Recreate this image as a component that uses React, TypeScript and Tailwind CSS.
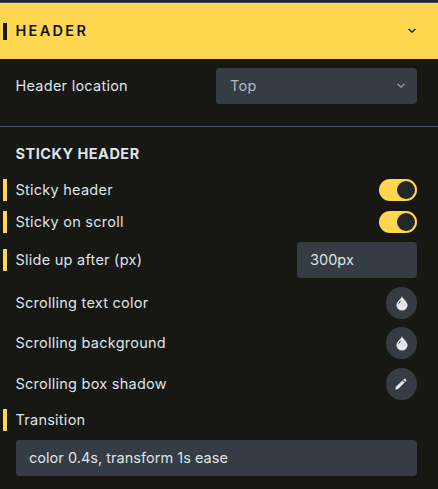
import type { ReactNode } from "react";

type RowProps = { label: string; marked?: boolean; className: string; children?: ReactNode };

function Row({ label, marked = false, className, children }: RowProps) {
  return (
    <div className={`flex items-center pl-[3px] pr-[21px] ${className}`}>
      <span className={`mr-[8.5px] h-[22px] w-1 shrink-0 ${marked ? "bg-[#ffd64f]" : ""}`} />
      <span className="flex-1 whitespace-nowrap leading-[22px]">{label}</span>
      {children}
    </div>
  );
}

function Toggle() {
  return (
    <span className="flex h-[22.5px] w-[38px] items-center justify-end rounded-full bg-[#ffd64f] pr-[2px]">
      <span className="size-[18px] rounded-full bg-[#23282d]" />
    </span>
  );
}

function Chevron({ className }: { className: string }) {
  return (
    <svg className={className} width="8" height="6" viewBox="0 0 8 6" fill="none" stroke="currentColor" strokeWidth="1.3">
      <path d="M0.6 1 L4 4.2 L7.4 1" />
    </svg>
  );
}

function Round({ children }: { children: ReactNode }) {
  return (
    <span className="flex size-[31.5px] items-center justify-center rounded-full bg-[#353c44] text-[#e2e6ea]">
      {children}
    </span>
  );
}

function Drop() {
  return (
    <svg className="ml-px" width="12" height="15" viewBox="0 0 12 15">
      <path fill="currentColor" d="M6 0.3C6.7 2.8 11.6 5.8 11.6 9.2A5.6 5.4 0 0 1 .4 9.2C.4 5.8 5.3 2.8 6 .3Z" />
      <path d="M2.9 7.3Q3.3 6 4.5 5" stroke="#353c44" strokeWidth="1" strokeLinecap="round" fill="none" />
    </svg>
  );
}

function Pencil() {
  return (
    <svg width="12" height="12" viewBox="0 0 12 12" fill="currentColor">
      <path d="M.4 11.5L.8 8.7L7.5 2.4L9.6 4.5L3.1 11.1Z" />
      <path d="M8.2 1.8L9.1 1Q9.8.4 10.5 1.1L11.1 1.7Q11.7 2.4 11.1 3.1L10.3 3.9Z" />
    </svg>
  );
}

export default function App() {
  return (
    <div className="h-[489px] w-[438px] overflow-hidden bg-[#171714] font-['Inter',sans-serif] text-[14.5px] tracking-[0.25px] text-[#dfe3e8]">
      <div className="h-[3px] border-b border-[#46505c] bg-[#23282d]" />
      <div className="flex h-14 items-center bg-[#ffd64f] pl-[3px] pr-[22px] text-[#11120f]">
        <span className="mr-[8.5px] h-[17px] w-1 bg-[#171714]" />
        <span className="flex-1 font-semibold tracking-[2.3px]">HEADER</span>
        <Chevron className="" />
      </div>
      <div className="h-[68px] border-b border-[#46505c] pt-[9px]">
        <Row label="Header location" className="h-9">
          <div className="flex h-9 w-[201px] items-center justify-between rounded bg-[#353c44] pl-[14px] pr-[12px] text-[#b3b9bf]">
            <span>Top</span>
            <Chevron className="text-[#949ba3]" />
          </div>
        </Row>
      </div>
      <h2 className="mt-[16px] pl-[15.5px] font-bold leading-[22px] tracking-[0.5px]">STICKY HEADER</h2>
      <Row label="Sticky header" marked className="mt-[9px] h-8"><Toggle /></Row>
      <Row label="Sticky on scroll" marked className="h-8"><Toggle /></Row>
      <Row label="Slide up after (px)" marked className="mt-[4px] h-9">
        <div className="flex h-9 w-[120px] items-center rounded bg-[#353c44] pl-[13px] tracking-[0.03px]">300px</div>
      </Row>
      <Row label="Scrolling text color" className="mt-[5px] h-10"><Round><Drop /></Round></Row>
      <Row label="Scrolling background" className="h-10"><Round><Drop /></Round></Row>
      <Row label="Scrolling box shadow" className="mt-px h-10"><Round><Pencil /></Round></Row>
      <Row label="Transition" marked className="mt-[5px] h-[22px]" />
      <div className="ml-4 mr-[21px] mt-[9px] flex h-9 items-center rounded bg-[#353c44] pl-[13px] tracking-[0.03px]">
        color 0.4s, transform 1s ease
      </div>
    </div>
  );
}
